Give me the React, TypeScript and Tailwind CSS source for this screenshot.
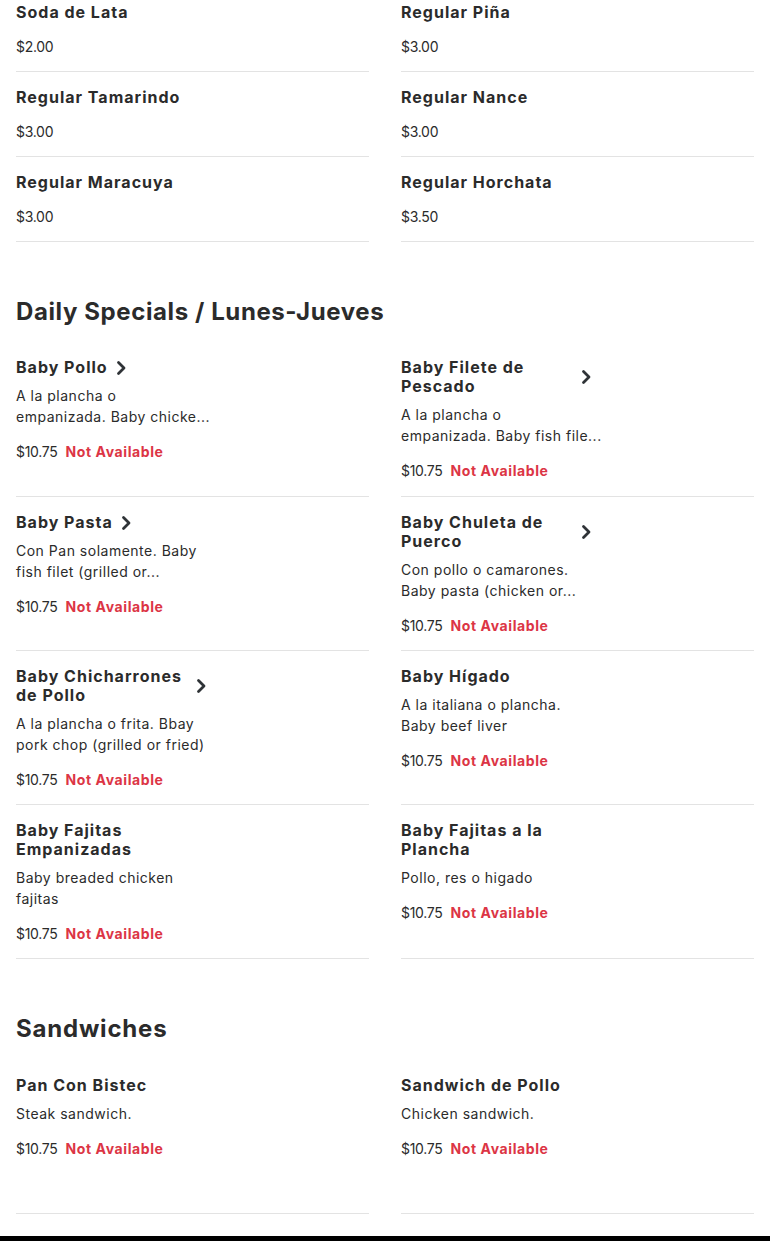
import React from "react";

type Item = {
  title: string[];
  chevron?: boolean;
  desc?: string[];
  price: string;
  na?: boolean;
};

const drinks: Item[] = [
  { title: ["Soda de Lata"], price: "$2.00" },
  { title: ["Regular Piña"], price: "$3.00" },
  { title: ["Regular Tamarindo"], price: "$3.00" },
  { title: ["Regular Nance"], price: "$3.00" },
  { title: ["Regular Maracuya"], price: "$3.00" },
  { title: ["Regular Horchata"], price: "$3.50" },
];

const specials: Item[] = [
  {
    title: ["Baby Pollo"],
    chevron: true,
    desc: ["A la plancha o", "empanizada. Baby chicke..."],
    price: "$10.75",
    na: true,
  },
  {
    title: ["Baby Filete de", "Pescado"],
    chevron: true,
    desc: ["A la plancha o", "empanizada. Baby fish file..."],
    price: "$10.75",
    na: true,
  },
  {
    title: ["Baby Pasta"],
    chevron: true,
    desc: ["Con Pan solamente. Baby", "fish filet (grilled or..."],
    price: "$10.75",
    na: true,
  },
  {
    title: ["Baby Chuleta de", "Puerco"],
    chevron: true,
    desc: ["Con pollo o camarones.", "Baby pasta (chicken or..."],
    price: "$10.75",
    na: true,
  },
  {
    title: ["Baby Chicharrones", "de Pollo"],
    chevron: true,
    desc: ["A la plancha o frita. Bbay", "pork chop (grilled or fried)"],
    price: "$10.75",
    na: true,
  },
  {
    title: ["Baby Hígado"],
    desc: ["A la italiana o plancha.", "Baby beef liver"],
    price: "$10.75",
    na: true,
  },
  {
    title: ["Baby Fajitas", "Empanizadas"],
    desc: ["Baby breaded chicken", "fajitas"],
    price: "$10.75",
    na: true,
  },
  {
    title: ["Baby Fajitas a la", "Plancha"],
    desc: ["Pollo, res o higado"],
    price: "$10.75",
    na: true,
  },
];

const sandwiches: Item[] = [
  { title: ["Pan Con Bistec"], desc: ["Steak sandwich."], price: "$10.75", na: true },
  { title: ["Sandwich de Pollo"], desc: ["Chicken sandwich."], price: "$10.75", na: true },
];

function Chevron() {
  return (
    <svg width="10" height="16" viewBox="0 0 10 16" className="shrink-0">
      <path
        d="M2.5 2.5 L8 8 L2.5 13.5"
        fill="none"
        stroke="#2f3337"
        strokeWidth="2.8"
        strokeLinecap="round"
        strokeLinejoin="round"
      />
    </svg>
  );
}

function MenuItem({ item, tall }: { item: Item; tall?: boolean }) {
  const wrapped = item.title.length > 1;
  return (
    <div
      className={
        "border-b border-[#e3e3e3] pt-4 pb-[14px] " + (tall ? "min-h-[154px]" : "")
      }
    >
      <div className="w-[190px]">
        <div className="flex items-center gap-2">
          <div
            className={
              "text-[16px] leading-[19px] font-bold text-[#2b2b2b] tracking-[1px] whitespace-nowrap " +
              (wrapped && item.chevron ? "w-[173px]" : "")
            }
          >
            {item.title.map((t, i) => (
              <div key={i}>{t}</div>
            ))}
          </div>
          {item.chevron && <Chevron />}
        </div>
        {item.desc && (
          <div className="mt-2 text-[14px] leading-[21px] text-[#2b2b2b] tracking-[0.5px] whitespace-nowrap">
            {item.desc.map((d, i) => (
              <div key={i}>{d}</div>
            ))}
          </div>
        )}
        <div className="mt-[14px] flex items-center gap-2 text-[14px] leading-[21px]">
          <span className="text-[#2b2b2b] tracking-[-0.3px]">{item.price}</span>
          {item.na && (
            <span className="font-bold text-[#dc3545] tracking-[0.6px]">Not Available</span>
          )}
        </div>
      </div>
    </div>
  );
}

export default function App() {
  return (
    <div
      className="bg-white text-[#2b2b2b]"
      style={{ fontFamily: "Inter, 'Open Sans', sans-serif" }}
    >
      <div className="px-4">
        <div className="-mt-[13px] grid grid-cols-2 gap-x-8">
          {drinks.map((it, i) => (
            <MenuItem key={i} item={it} />
          ))}
        </div>

        <h2 className="mt-[54px] mb-[14px] text-[24px] leading-8 font-bold tracking-[0.6px] text-[#2b2b2b]">
          Daily Specials / Lunes-Jueves
        </h2>
        <div className="grid grid-cols-2 gap-x-8 [&>*:nth-child(-n+2)]:min-h-[155px]">
          {specials.map((it, i) => (
            <MenuItem key={i} item={it} tall />
          ))}
        </div>

        <h2 className="mt-[54px] mb-[15px] text-[24px] leading-8 font-bold tracking-[0.8px] text-[#2b2b2b]">
          Sandwiches
        </h2>
        <div className="grid grid-cols-2 gap-x-8">
          {sandwiches.map((it, i) => (
            <MenuItem key={i} item={it} tall />
          ))}
        </div>
      </div>
      <div className="mt-[22px] h-[200px] bg-black" />
    </div>
  );
}
